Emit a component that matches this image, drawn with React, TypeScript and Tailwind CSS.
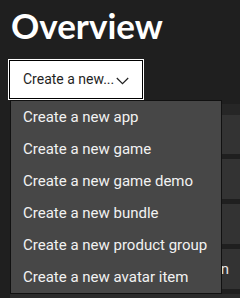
import React from "react";

const items = [
  "Create a new app",
  "Create a new game",
  "Create a new game demo",
  "Create a new bundle",
  "Create a new product group",
  "Create a new avatar item",
];

export default function App() {
  return (
    <div
      className="relative w-[240px] h-[298px] overflow-hidden bg-[#1f1f1f]"
      style={{ fontFamily: 'Roboto, "Open Sans", sans-serif' }}
    >
      <h1
        className="pl-[11px] pt-[3px] text-[35px] leading-[44px] font-bold text-white"
        style={{ fontFamily: 'Lato, "Open Sans", sans-serif' }}
      >
        Overview
      </h1>
      <div className="pl-[8px] mt-[12px]">
        <div className="w-[136px] h-[41px] border border-white">
          <div className="flex h-full items-center gap-[2px] border border-black bg-white pl-[13px] text-[14px] text-[#1f1f1f]">
            <span>Create a new...</span>
            <svg width="13" height="8" viewBox="0 0 13 8" fill="none" className="mt-[2px]">
              <path d="M0.8 1l5.7 5.6L12.2 1" stroke="#1f1f1f" strokeWidth="1.2" />
            </svg>
          </div>
        </div>
      </div>
      <div className="mt-[4px] h-[11px] ml-[10px] bg-[#262626]" />
      <div className="ml-[10px] flex flex-col gap-[5px]">
        <div className="h-[39px] bg-[#333333]" />
        <div className="h-[40px] bg-[#333333]" />
        <div className="h-[40px] bg-[#333333]" />
        <div className="flex h-[40px] items-center justify-end bg-[#333333] pr-[11px] text-[15px] text-[#e6e6e6]">
          Learn
        </div>
        <div className="h-[40px] bg-[#2b2b2b]" />
      </div>
      <div className="absolute left-[10px] top-[100px] w-[212px] border border-[#111111] bg-[#474747]">
        {items.map((t) => (
          <div
            key={t}
            className="flex h-[32px] items-center pl-[12px] text-[15px] text-[#f2f2f2]"
          >
            {t}
          </div>
        ))}
      </div>
    </div>
  );
}
